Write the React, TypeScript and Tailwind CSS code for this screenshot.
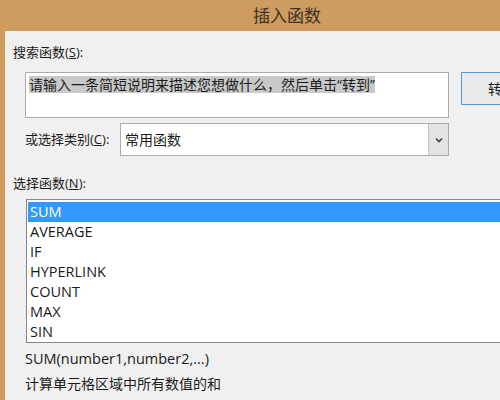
const items = ["SUM", "AVERAGE", "IF", "HYPERLINK", "COUNT", "MAX", "SIN"];

const font = { fontFamily: '"Open Sans", "Noto Sans CJK SC", sans-serif' };

export default function App() {
  return (
    <div
      className="w-[500px] h-[400px] overflow-hidden bg-[#cf9c60] flex flex-col text-[#1a1a1a]"
      style={font}
    >
      {/* Title bar */}
      <div className="h-[31px] shrink-0 flex items-center pl-[253px] text-[17px] text-[#3b3024]">
        插入函数
      </div>

      <div className="flex flex-1 min-h-0">
        <div className="w-[5px] shrink-0" />
        <div className="flex-1 bg-[#f0f0f0] flex flex-col pl-[8px] text-[13px]">
          <div className="mt-[12px] h-[18px] leading-[18px]">
            搜索函数(<span className="underline">S</span>):
          </div>

          {/* Search box + button */}
          <div className="mt-[11px] ml-[12px] flex items-start">
            <div className="w-[424px] h-[46px] shrink-0 bg-white border border-[#ababab] pl-[3px] pt-[3px]">
              <span className="bg-[#c9c9c9] text-[14px] leading-[17px] inline-block">
                请输入一条简短说明来描述您想做什么，然后单击“转到”
              </span>
            </div>
            <div className="ml-[12px] w-[80px] h-[33px] shrink-0 border border-[#4f9bdf] bg-[#eaeaea] flex items-center pl-[26px] text-[14px]">
              转到
            </div>
          </div>

          {/* Category */}
          <div className="mt-[5px] ml-[12px] flex items-center">
            <span className="w-[95px] shrink-0">
              或选择类别(<span className="underline">C</span>):
            </span>
            <div className="w-[329px] h-[33px] shrink-0 flex border border-[#ababab] bg-white">
              <div className="flex-1 flex items-center pl-[4px] text-[14px]">常用函数</div>
              <div className="w-[20px] bg-[#e3e3e3] border-l border-[#c2c2c2] flex items-center justify-center">
                <svg width="8" height="6" viewBox="0 0 8 6">
                  <path d="M1 1.5 L4 4.5 L7 1.5" stroke="#404040" strokeWidth="1.6" fill="none" />
                </svg>
              </div>
            </div>
          </div>

          <div className="mt-[18px] h-[18px] leading-[18px]">
            选择函数(<span className="underline">N</span>):
          </div>

          {/* Function list */}
          <div className="mt-[7px] ml-[13px] w-[500px] h-[144px] shrink-0 bg-white border border-[#828790] pt-[2px] pl-[1px] text-[14.5px]">
            {items.map((it, i) => (
              <div
                key={it}
                className={
                  i === 0
                    ? "h-[20px] leading-[20px] pl-[2px] bg-[#3399ff] text-white"
                    : "h-[20px] leading-[20px] pl-[2px]"
                }
              >
                {it}
              </div>
            ))}
          </div>

          <div className="mt-[6px] ml-[12px] h-[20px] leading-[20px] text-[14.5px]">
            SUM(number1,number2,...)
          </div>
          <div className="mt-[5px] ml-[12px] h-[20px] leading-[20px] text-[14px]">
            计算单元格区域中所有数值的和
          </div>
        </div>
      </div>
    </div>
  );
}
